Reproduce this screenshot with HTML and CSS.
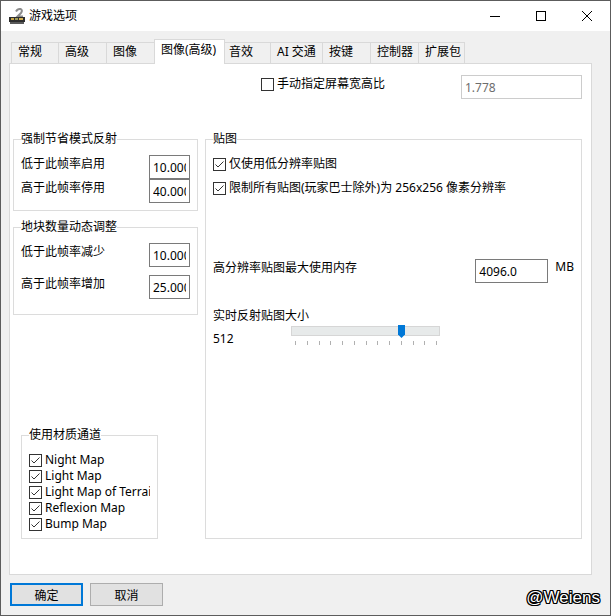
FILE: index.html
```html
<!DOCTYPE html>
<html lang="zh-CN">
<head>
  <meta charset="UTF-8">
  <title>游戏选项</title>
  <link rel="stylesheet" href="styles.css">
</head>
<body>

  <div class="window">
    <div class="titlebar">
      <svg class="app-icon" width="16" height="18" viewBox="0 0 16 18">
        <path d="M7 4.5 Q8.5 1.5 11.5 2 Q14 3 12 6 L8.5 9.5 H14" fill="none" stroke="#8c8c8c" stroke-width="2"/>
        <rect x="0" y="10" width="16" height="5" fill="#2e2e2e"/>
        <rect x="2" y="11" width="3" height="2" fill="#c9a545"/>
        <rect x="6" y="11" width="3" height="2" fill="#9a9a5a"/>
        <rect x="10" y="11" width="4" height="2" fill="#d4b050"/>
        <rect x="1" y="15" width="14" height="2" fill="#5a5a5a"/>
      </svg>
      <span class="title">游戏选项</span>
      <div class="caption">
        <span class="cap-btn">
          <svg width="10" height="10" viewBox="0 0 10 10"><path d="M0 5.5 H10" stroke="#000" stroke-width="1"/></svg>
        </span>
        <span class="cap-btn">
          <svg width="10" height="10" viewBox="0 0 10 10"><rect x="0.5" y="0.5" width="9" height="9" fill="none" stroke="#000" stroke-width="1"/></svg>
        </span>
        <span class="cap-btn">
          <svg width="10" height="10" viewBox="0 0 10 10"><path d="M0 0 L10 10 M10 0 L0 10" stroke="#000" stroke-width="1"/></svg>
        </span>
      </div>
    </div>

    <div class="content">
      <div class="tabs">
        <div class="tab">常规</div>
        <div class="tab">高级</div>
        <div class="tab">图像</div>
        <div class="tab active">图像(高级)</div>
        <div class="tab">音效</div>
        <div class="tab">AI 交通</div>
        <div class="tab">按键</div>
        <div class="tab">控制器</div>
        <div class="tab">扩展包</div>
      </div>

      <div class="panel">
        <div class="aspect-row">
          <label class="check aspect-check"><span class="cb"></span>手动指定屏幕宽高比</label>
          <input class="textbox disabled aspect-input" type="text" value="1.778" readonly>
        </div>

        <div class="columns">
          <div class="col-left">
            <fieldset class="group group-reflect">
              <legend>强制节省模式反射</legend>
              <div class="field-grid">
                <span class="field-label">低于此帧率启用</span>
                <input class="textbox" type="text" value="10.000" readonly>
                <span class="field-label">高于此帧率停用</span>
                <input class="textbox" type="text" value="40.000" readonly>
              </div>
            </fieldset>

            <fieldset class="group group-tiles">
              <legend>地块数量动态调整</legend>
              <div class="field-grid spaced">
                <span class="field-label">低于此帧率减少</span>
                <input class="textbox" type="text" value="10.000" readonly>
                <span class="field-label">高于此帧率增加</span>
                <input class="textbox" type="text" value="25.000" readonly>
              </div>
            </fieldset>

            <fieldset class="group group-maps">
              <legend>使用材质通道</legend>
              <div class="map-list">
                <label class="check"><span class="cb"><svg width="11" height="11" viewBox="0 0 11 11"><path d="M1.5 5.5 L4 8 L9.5 2.5" fill="none" stroke="#333" stroke-width="1"/></svg></span>Night Map</label>
                <label class="check"><span class="cb"><svg width="11" height="11" viewBox="0 0 11 11"><path d="M1.5 5.5 L4 8 L9.5 2.5" fill="none" stroke="#333" stroke-width="1"/></svg></span>Light Map</label>
                <label class="check"><span class="cb"><svg width="11" height="11" viewBox="0 0 11 11"><path d="M1.5 5.5 L4 8 L9.5 2.5" fill="none" stroke="#333" stroke-width="1"/></svg></span>Light Map of Terrain</label>
                <label class="check"><span class="cb"><svg width="11" height="11" viewBox="0 0 11 11"><path d="M1.5 5.5 L4 8 L9.5 2.5" fill="none" stroke="#333" stroke-width="1"/></svg></span>Reflexion Map</label>
                <label class="check"><span class="cb"><svg width="11" height="11" viewBox="0 0 11 11"><path d="M1.5 5.5 L4 8 L9.5 2.5" fill="none" stroke="#333" stroke-width="1"/></svg></span>Bump Map</label>
              </div>
            </fieldset>
          </div>

          <fieldset class="group group-textures">
            <legend>贴图</legend>
            <label class="check"><span class="cb"><svg width="11" height="11" viewBox="0 0 11 11"><path d="M1.5 5.5 L4 8 L9.5 2.5" fill="none" stroke="#333" stroke-width="1"/></svg></span>仅使用低分辨率贴图</label>
            <label class="check second"><span class="cb"><svg width="11" height="11" viewBox="0 0 11 11"><path d="M1.5 5.5 L4 8 L9.5 2.5" fill="none" stroke="#333" stroke-width="1"/></svg></span>限制所有贴图(玩家巴士除外)为 256x256 像素分辨率</label>

            <div class="mem-row">
              <span class="mem-label">高分辨率贴图最大使用内存</span>
              <input class="textbox mem-input" type="text" value="4096.0" readonly>
              <span class="mem-unit">MB</span>
            </div>

            <div class="reflect-label">实时反射贴图大小</div>
            <div class="slider-row">
              <span class="slider-value">512</span>
              <div class="slider">
                <div class="track"></div>
                <svg class="thumb" width="7" height="13" viewBox="0 0 7 13"><path d="M0 0 H7 V9.5 L3.5 13 L0 9.5 Z" fill="#0078d7"/></svg>
                <div class="ticks">
                  <i></i><i></i><i></i><i></i><i></i><i></i><i></i><i></i><i></i><i></i><i></i><i></i><i></i>
                </div>
              </div>
            </div>
          </fieldset>
        </div>
      </div>

      <div class="footer">
        <button class="btn default">确定</button>
        <button class="btn">取消</button>
        <span class="watermark">@Weiens</span>
      </div>
    </div>
  </div>

</body>
</html>
```

FILE: styles.css
```css
* {
  box-sizing: border-box;
}

html, body {
  margin: 0;
}

body {
  font-family: "Noto Sans", "Noto Sans CJK SC", sans-serif;
  font-size: 12px;
  color: #000;
  background-color: #f0f0f0;
}

.window {
  width: 611px;
  height: 616px;
  border: 1px solid #5c5c5c;
  background-color: #f0f0f0;
}

/* title bar */
.titlebar {
  height: 30px;
  background-color: #fff;
  display: flex;
  align-items: center;
}

.app-icon {
  margin-left: 8px;
  margin-top: -1px;
}

.title {
  margin-left: 4px;
  line-height: 16px;
  margin-top: -1px;
}

.caption {
  margin-left: auto;
  display: flex;
}

.cap-btn {
  width: 46px;
  height: 30px;
  display: flex;
  align-items: center;
  justify-content: center;
}

/* tabs */
.content {
  padding: 8px 0 0 8px;
}

.tabs {
  display: flex;
  align-items: flex-end;
  height: 24px;
  padding-left: 2px;
}

.tab {
  height: 21px;
  border: 1px solid #d9d9d9;
  border-right: 0;
  border-bottom: 0;
  padding: 1px 0 0 6px;
  line-height: 16px;
  white-space: nowrap;
  overflow: hidden;
}

.tab:nth-child(1) { width: 47px; }
.tab:nth-child(2) { width: 48px; }
.tab:nth-child(3) { width: 50px; }
.tab:nth-child(5) { width: 48px; }
.tab:nth-child(6) { width: 52px; }
.tab:nth-child(7) { width: 48px; }
.tab:nth-child(8) { width: 48px; }
.tab:nth-child(9) {
  width: 47px;
  border-right: 1px solid #d9d9d9;
}

.tab.active {
  position: relative;
  z-index: 1;
  width: 71px;
  height: 25px;
  margin: 0 -3px -1px -2px;
  padding-top: 2px;
  background-color: #fff;
  border-right: 1px solid #d9d9d9;
}

/* panel */
.panel {
  width: 583px;
  height: 512px;
  border: 1px solid #d9d9d9;
  background-color: #fff;
  padding: 0 9px 0 3px;
}

.aspect-row {
  display: flex;
  align-items: flex-start;
  height: 24px;
  margin-top: 11px;
}

.aspect-check {
  margin-left: 248px;
  margin-top: 1px;
}

.aspect-input {
  margin-left: auto;
  width: 121px;
}

.check {
  display: flex;
  align-items: center;
  height: 16px;
  line-height: 16px;
  white-space: nowrap;
}

.cb {
  flex: none;
  width: 13px;
  height: 13px;
  border: 1px solid #333;
  background-color: #fff;
  margin-right: 3px;
  display: flex;
}

.cb svg {
  display: block;
}

.textbox {
  height: 24px;
  border: 1px solid #7a7a7a;
  padding: 0 3px;
  font-family: "Noto Sans", "Noto Sans CJK SC", sans-serif;
  font-size: 12px;
  color: #000;
  background-color: #fff;
  outline: none;
}

.textbox.disabled {
  border-color: #cccccc;
  color: #6d6d6d;
}

.columns {
  display: flex;
  gap: 7px;
  margin-top: 32px;
}

.col-left {
  width: 185px;
  display: flex;
  flex-direction: column;
}

/* group boxes */
.group {
  margin: 0;
  border: 1px solid #dcdcdc;
  min-width: 0;
}

.group legend {
  padding: 0;
  line-height: 16px;
}

.group-reflect {
  padding: 8px 7px 7px 7px;
}

.group-tiles {
  margin-top: 8px;
  padding: 8px 7px 15px 7px;
}

.group-maps {
  width: 137px;
  margin-top: 112px;
  margin-left: 8px;
  padding: 9px 7px 6px 7px;
}

.field-grid {
  display: grid;
  grid-template-columns: 1fr 41px;
  grid-auto-rows: 24px;
}

.field-grid.spaced {
  row-gap: 8px;
}

.field-grid .textbox {
  width: 41px;
}

.field-label {
  padding-top: 1px;
  line-height: 16px;
}

.map-list {
  width: 121px;
  overflow: hidden;
}

.group-textures {
  width: 377px;
  padding: 9px 7px 135px 7px;
}

.check.second {
  margin-top: 8px;
}

.mem-row {
  display: flex;
  align-items: flex-start;
  height: 24px;
  margin-top: 63px;
}

.mem-label {
  width: 264px;
  margin-top: 1px;
  line-height: 16px;
}

.mem-input {
  width: 73px;
}

.mem-unit {
  margin-left: 7px;
  line-height: 16px;
}

.reflect-label {
  margin-top: 25px;
  line-height: 16px;
}

/* slider */
.slider-row {
  display: flex;
  height: 23px;
}

.slider-value {
  width: 78px;
  margin-top: 7px;
  line-height: 16px;
}

.slider {
  position: relative;
  width: 149px;
  padding-top: 2px;
}

.track {
  height: 10px;
  border: 1px solid #d6d6d6;
  background-color: #e7eaea;
}

.thumb {
  position: absolute;
  left: 107px;
  top: 1px;
}

.ticks {
  display: flex;
  justify-content: space-between;
  width: 142px;
  margin: 5px 0 0 4px;
}

.ticks i {
  width: 1px;
  height: 4px;
  background-color: #b0b0b0;
}

/* bottom buttons */
.footer {
  display: flex;
  align-items: center;
  height: 23px;
  margin-top: 8px;
  padding: 0 10px 0 1px;
}

.btn {
  width: 73px;
  height: 23px;
  margin: 0;
  padding: 0;
  border: 1px solid #adadad;
  background-color: #e1e1e1;
  font-family: "Noto Sans", "Noto Sans CJK SC", sans-serif;
  font-size: 12px;
  color: #000;
}

.btn.default {
  border: 2px solid #0078d7;
}

.btn + .btn {
  margin-left: 7px;
}

.watermark {
  margin-left: auto;
  margin-top: 5px;
  font-family: "Liberation Sans", sans-serif;
  font-size: 17px;
  line-height: 17px;
  color: #fff;
  text-shadow: 1px 0 #000, -1px 0 #000, 0 1px #000, 0 -1px #000,
    1px 1px #000, -1px -1px #000, 1px -1px #000, -1px 1px #000;
}
```
